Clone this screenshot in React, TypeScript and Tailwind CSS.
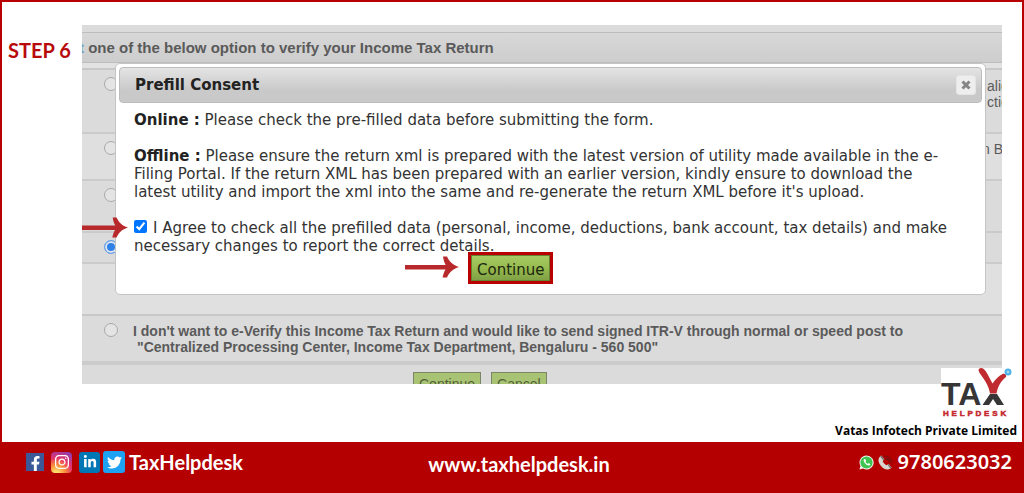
import { FaFacebookF, FaInstagram, FaLinkedinIn, FaTwitter } from "react-icons/fa";

const options = [
  { id: "aadhaar", height: "h-[64px]", shade: "bg-[#dbdbdb]", tail: ["alid", "ction"], tailBox: "w-[15px] pt-px" },
  { id: "bank", height: "h-[47px]", shade: "bg-[#dfdfdf]", tail: ["n B"], tailBox: "w-[20px]" },
  { id: "demat", height: "h-[52px]", shade: "bg-[#dbdbdb]" },
  { id: "evc", height: "h-[31px]", shade: "bg-[#dbdbdb]", checked: true },
];

function Radio({ id, checked = false }: { id: string; checked?: boolean }) {
  return (
    <input
      type="radio"
      name="verify"
      id={id}
      aria-label={id}
      defaultChecked={checked}
      className="size-[14px] shrink-0 appearance-none rounded-full border border-[#a9a9a9] bg-[#e4e4e4] checked:border-[#6ba2e6] checked:bg-[#2f80e8] checked:shadow-[inset_0_0_0_2px_#dfe6ef]"
    />
  );
}

function Arrow({ className }: { className: string }) {
  return (
    <svg viewBox="0 0 54 22" className={className} preserveAspectRatio="xMaxYMid slice" aria-hidden="true">
      <path d="M0 9h44v4.500H0z" fill="#b8292c" />
      <path d="M38 0.500h4C44.500 6 48 9 54 11c-6 2-9.500 5-12 10.500h-4.500c1-4 2-7 4.500-10.500C39.500 7.500 38.500 4.500 38 .5z" fill="#b8292c" />
    </svg>
  );
}

function Logo() {
  return (
    <svg viewBox="0 0 72 50" className="h-[50px] w-[72px] bg-white" role="img" aria-label="Tax Helpdesk">
      <text x="0" y="37" fill="#373536" fontSize="32" fontWeight="700" className="font-['Liberation_Sans',sans-serif]">
        TA
      </text>
      <path d="M49 26h7l7 11h-7l-4-6-4 6h-6.500z" fill="#373536" />
      <path d="M40.500 0c3 .5 5 4 7 8l4 7.500c3-4 6-7.500 10-9.500 2-1 4.500.5 3.500 3-5 4-8 9-9.500 16.500h-6.500c-1-7-4.500-12.500-9-18.500-3-4-3.500-7 .5-7z" fill="#c02b30" />
      <circle cx="67" cy="4" r="3.500" fill="#4fb3e6" />
      <circle cx="67" cy="4" r="1.300" fill="#a8daf4" />
      <text x="2" y="47.500" fill="#c4262c" stroke="#c4262c" strokeWidth="0.500" fontSize="8" fontWeight="700" letterSpacing="2.800" className="font-['Liberation_Sans',sans-serif]">
        HELPDESK
      </text>
    </svg>
  );
}

function ConsentDialog() {
  return (
    <section
      role="dialog"
      aria-labelledby="consent-title"
      className="absolute top-[38px] right-4 left-[33px] h-[232px] rounded-[5px] border border-[#c4c4c4] bg-white p-[3px] font-['DejaVu_Sans',Verdana,sans-serif] text-[15px] leading-[18px] text-[#333]"
    >
      <header className="flex h-9 items-center justify-between rounded-[4px] border border-[#bcbcbc] bg-linear-to-b from-[#e4e4e4] to-[#c9c9c9] to-65% pr-[5px] pl-[15px]">
        <h2 id="consent-title" className="font-bold text-[#222]">Prefill Consent</h2>
        <button type="button" aria-label="Close" className="flex size-5 items-center justify-center rounded-[3px] border border-[#e4e4e4] bg-[#eee]">
          <svg viewBox="0 0 10 10" className="size-[10px]" aria-hidden="true">
            <path d="M1.500 1.500l7 7M8.500 1.500l-7 7" stroke="#858585" strokeWidth="3" />
          </svg>
        </button>
      </header>
      <div className="pt-2 pr-6 pl-[15px]">
        <p>
          <b className="text-[#222]">Online :</b> Please check the pre-filled data before submitting the form.
        </p>
        <p className="mt-[18px]">
          <b className="text-[#222]">Offline :</b> Please ensure the return xml is prepared with the latest version of utility made available in the e-Filing Portal. If the return XML has been prepared with an earlier version, kindly ensure to download the latest utility and import the xml into the same and re-generate the return XML before it's upload.
        </p>
        <p className="mt-[18px]">
          <input type="checkbox" id="agree" defaultChecked className="mr-[6px] size-[13px] accent-[#0075ff]" />
          <label htmlFor="agree">
            I Agree to check all the prefilled data (personal, income, deductions, bank account, tax details) and make necessary changes to report the correct details.
          </label>
        </p>
        <div className="-mt-[3px] flex items-start gap-[9px] pl-[271px]">
          <Arrow className="mt-1 h-[22px] w-[54px]" />
          <button type="button" className="relative h-8 border-3 border-[#b80000] bg-linear-to-b from-[#a9cc66] via-[#96bb4e] to-[#7f9f45] px-[6px] pt-1 text-[#1d2610] shadow-[inset_0_0_0_1px_#66822f]">
            Continue
          </button>
        </div>
      </div>
    </section>
  );
}

function VerifyPanel() {
  return (
    <div className="relative min-w-0 flex-1 overflow-hidden bg-[#dbdbdb] pt-[7px] font-['Liberation_Sans',Arial,sans-serif] text-sm leading-4 text-[#5a5a5a]">
      <h1 className="h-[31px] overflow-hidden border-y border-[#bdbdbd] bg-linear-to-b from-[#d8d8d8] to-[#cdcdcd] text-[15px] leading-[29px] font-bold whitespace-nowrap">
        <span className="-ml-[3px]"><span className="text-[#6f9cc0]">t</span> one of the below option to verify your Income Tax Return</span>
      </h1>
      <div className="h-[7px] border-b-2 border-[#c8c8c8] bg-[#e2e2e2]" />
      {options.map((o) => (
        <div key={o.id} className={`flex justify-between overflow-hidden border-b-2 border-[#cbcbcb] pt-[7px] pl-[22px] ${o.height} ${o.shade}`}>
          <Radio id={o.id} checked={o.checked} />
          {o.tail && (
            <div className={`overflow-hidden whitespace-nowrap ${o.tailBox}`}>
              {o.tail.map((t) => <p key={t}>{t}</p>)}
            </div>
          )}
        </div>
      ))}
      <div className="h-[52px] border-b-2 border-[#c8c8c8] bg-[#e0e0e0]" />
      <div className="flex h-[49px] gap-[15px] border-b-4 border-[#cbcbcb] pt-[7px] pl-[22px]">
        <Radio id="itrv" />
        <label htmlFor="itrv" className="font-bold">
          I don't want to e-Verify this Income Tax Return and would like to send signed ITR-V through normal or speed post to
          <span className="block pl-1">"Centralized Processing Center, Income Tax Department, Bengaluru - 560 500"</span>
        </label>
      </div>
      <div className="flex h-[19px] gap-[10px] overflow-hidden pt-[7px] pl-[331px]">
        <button type="button" className="h-6 shrink-0 border border-[#7b8664] bg-[#a8c373] px-[5px] text-[#53613a]">Continue</button>
        <button type="button" className="h-6 shrink-0 border border-[#7b8664] bg-[#a8c373] px-[5px] text-[#53613a]">Cancel</button>
      </div>
      <ConsentDialog />
      <Arrow className="absolute top-[192px] left-0 h-[21px] w-[46px]" />
    </div>
  );
}

function Footer() {
  return (
    <footer className="grid grid-cols-[1fr_auto_1fr] items-start bg-[#b40000] pt-2 pr-3 pb-[17px] pl-[26px] font-['Lato',sans-serif] text-[20px] leading-6 font-bold text-white">
      <div className="flex items-center">
        <a href="#facebook" aria-label="Facebook" className="mr-[7px] flex size-[18px] items-end justify-center bg-[#3b5998]">
          <FaFacebookF className="size-[15px]" />
        </a>
        <a href="#instagram" aria-label="Instagram" className="mr-[7px] flex size-[21px] items-center justify-center rounded-[4px] bg-[radial-gradient(circle_at_25%_105%,#ffdc6a_10%,#fb8a3c_35%,#e2336d_60%,#7a3cc4_100%)]">
          <FaInstagram className="size-4" />
        </a>
        <a href="#linkedin" aria-label="LinkedIn" className="mr-[3px] flex size-[21px] items-center justify-center rounded-[3px] bg-[#0077b5]">
          <FaLinkedinIn className="size-[14px]" />
        </a>
        <a href="#twitter" aria-label="Twitter" className="mr-1 flex size-[22px] items-center justify-center rounded-[3px] bg-[#1da1f2]">
          <FaTwitter className="size-[15px]" />
        </a>
        <span>TaxHelpdesk</span>
      </div>
      <a href="https://www.taxhelpdesk.in" className="pt-[2px]">www.taxhelpdesk.in</a>
      <div className="flex items-center justify-end">
        <svg viewBox="0 0 16 16" className="mr-1 size-[15px]" aria-hidden="true">
          <path d="M8 .5a7.500 7.500 0 1 1-3.600 14L.5 15.500l1-3.800A7.500 7.500 0 0 1 8 .5z" fill="#f3f3f3" />
          <circle cx="8" cy="8" r="6.500" fill="#3fc351" />
          <path d="M5.800 4.300c-1.500.8-1 2.700.6 4.500s3.800 3 4.900 2.200c.9-.7.8-1.400.4-1.600l-1.300-.7c-.5-.2-.8.7-1.200.7-.7-.1-2-1.400-2.200-2 0-.4.7-.6.500-1.200l-.6-1.500c-.2-.5-.7-.6-1.100-.4z" fill="#fff" />
        </svg>
        <svg viewBox="0 0 16 16" className="mr-[5px] size-[15px]" aria-hidden="true">
          <path d="M7 1.500c4.500-.5 7.500 2.500 7.500 7M8 4c2.500 0 4 1.500 4 4" fill="none" stroke="#7c1010" strokeWidth="1.500" />
          <path d="M3.500.5C-1 3.500 0 8 3.500 12s7.500 4.500 11 1.500l-3-4-2.500 1.500C7.500 10.500 5.500 8 5 6.500L6.800 4.500z" fill="#d9d4d0" />
          <path d="M3.500.5l3.300 4-1.300 1L2.200 1.700zM14.500 13.500l-3-4-1.300.9 2.800 3.900z" fill="#77706e" />
        </svg>
        <span className="font-['Noto_Sans',sans-serif] font-semibold">9780623032</span>
      </div>
    </footer>
  );
}

export default function App() {
  return (
    <div className="flex min-h-screen flex-col bg-white">
      <main className="flex-1 border-x-2 border-t-2 border-[#b80000]">
        <div className="flex pt-[23px] pr-5">
          <p className="w-20 shrink-0 pt-[13px] pl-[6px] font-['Lato',sans-serif] text-[20px] leading-6 font-bold text-[#b80a0a]">STEP 6</p>
          <VerifyPanel />
        </div>
        <div className="relative -mt-4 flex flex-col items-end gap-1 pr-[5px]">
          <div className="pr-1"><Logo /></div>
          <p className="font-['Open_Sans',sans-serif] text-xs leading-[18px] font-bold text-black">Vatas Infotech Private Limited</p>
        </div>
      </main>
      <Footer />
    </div>
  );
}
